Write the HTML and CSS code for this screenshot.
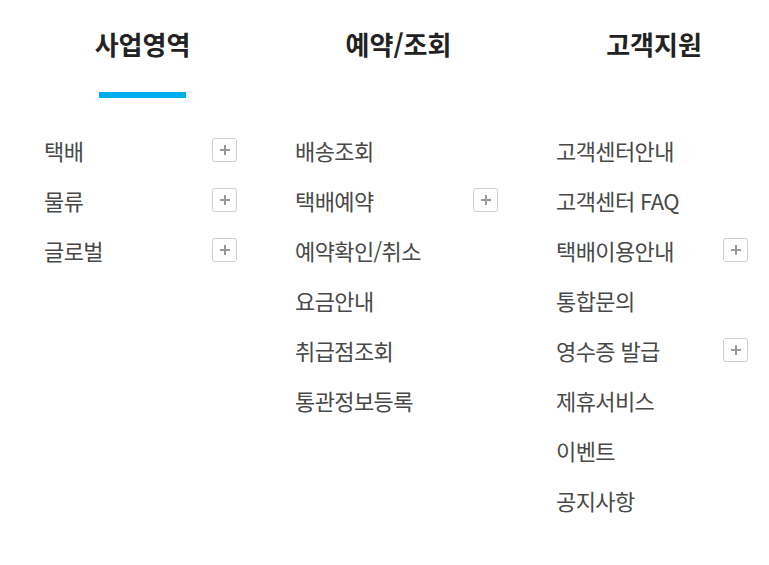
FILE: index.html
```html
<!DOCTYPE html>
<html lang="ko">
<head>
  <meta charset="UTF-8">
  <meta name="viewport" content="width=device-width, initial-scale=1.0">
  <title>사이트맵</title>
  <link rel="stylesheet" href="styles.css">
</head>
<body>
  <div class="sitemap">
    <div class="column active">
      <h2 class="column-title">사업영역</h2>
      <div class="title-bar"></div>
      <ul class="menu">
        <li class="menu-item"><span>택배</span><button class="more-button"><svg width="10" height="10" viewBox="0 0 10 10"><path d="M5 0v10M0 5h10" stroke="#9a9a9a" stroke-width="2"/></svg></button></li>
        <li class="menu-item"><span>물류</span><button class="more-button"><svg width="10" height="10" viewBox="0 0 10 10"><path d="M5 0v10M0 5h10" stroke="#9a9a9a" stroke-width="2"/></svg></button></li>
        <li class="menu-item"><span>글로벌</span><button class="more-button"><svg width="10" height="10" viewBox="0 0 10 10"><path d="M5 0v10M0 5h10" stroke="#9a9a9a" stroke-width="2"/></svg></button></li>
      </ul>
    </div>

    <div class="column">
      <h2 class="column-title">예약/조회</h2>
      <div class="title-bar"></div>
      <ul class="menu">
        <li class="menu-item"><span>배송조회</span></li>
        <li class="menu-item"><span>택배예약</span><button class="more-button"><svg width="10" height="10" viewBox="0 0 10 10"><path d="M5 0v10M0 5h10" stroke="#9a9a9a" stroke-width="2"/></svg></button></li>
        <li class="menu-item"><span>예약확인/취소</span></li>
        <li class="menu-item"><span>요금안내</span></li>
        <li class="menu-item"><span>취급점조회</span></li>
        <li class="menu-item"><span>통관정보등록</span></li>
      </ul>
    </div>

    <div class="column">
      <h2 class="column-title">고객지원</h2>
      <div class="title-bar"></div>
      <ul class="menu">
        <li class="menu-item"><span>고객센터안내</span></li>
        <li class="menu-item"><span>고객센터 FAQ</span></li>
        <li class="menu-item"><span>택배이용안내</span><button class="more-button"><svg width="10" height="10" viewBox="0 0 10 10"><path d="M5 0v10M0 5h10" stroke="#9a9a9a" stroke-width="2"/></svg></button></li>
        <li class="menu-item"><span>통합문의</span></li>
        <li class="menu-item"><span>영수증 발급</span><button class="more-button"><svg width="10" height="10" viewBox="0 0 10 10"><path d="M5 0v10M0 5h10" stroke="#9a9a9a" stroke-width="2"/></svg></button></li>
        <li class="menu-item"><span>제휴서비스</span></li>
        <li class="menu-item"><span>이벤트</span></li>
        <li class="menu-item"><span>공지사항</span></li>
      </ul>
    </div>
  </div>
</body>
</html>
```

FILE: styles.css
```css
:root {
  --title-color: #222222;
  --text-color: #484848;
  --accent: #00aeef;
  --box-border: #cfcfcf;
}

body {
  margin: 0;
  padding: 0;
  background-color: #ffffff;
  font-family: "Noto Sans CJK KR", "Noto Sans", sans-serif;
}

.sitemap {
  display: grid;
  grid-template-columns: 193px 203px 192px;
  column-gap: 58px;
  padding: 26px 0 0 44px;
}

.column {
  display: flex;
  flex-direction: column;
  align-items: center;
}

.column-title {
  margin: 0 0 0 4px;
  font-size: 26px;
  font-weight: 700;
  line-height: 36px;
  letter-spacing: 0;
  color: var(--title-color);
}

.title-bar {
  width: 87px;
  height: 6px;
  margin: 30px 0 0 4px;
  background-color: transparent;
}

.column.active .title-bar {
  background-color: var(--accent);
}

.menu {
  list-style: none;
  margin: 27px 0 0 0;
  padding: 0;
  align-self: stretch;
}

.menu-item {
  display: flex;
  align-items: center;
  justify-content: space-between;
  height: 50px;
  font-size: 22px;
  letter-spacing: -0.6px;
  color: var(--text-color);
}

.more-button {
  display: flex;
  align-items: center;
  justify-content: center;
  width: 25px;
  height: 24px;
  padding: 0;
  background-color: #ffffff;
  border: 1px solid var(--box-border);
  border-radius: 3px;
  cursor: pointer;
}
```
